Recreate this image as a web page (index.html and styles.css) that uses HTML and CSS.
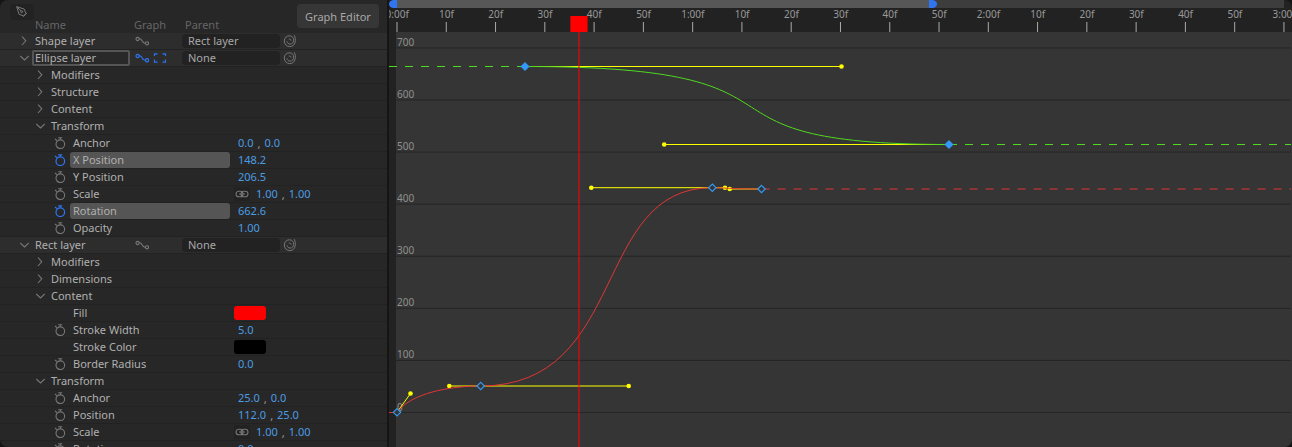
FILE: index.html
```
<!DOCTYPE html>
<html lang="en">
<head>
<meta charset="utf-8">
<title>Graph Editor</title>
<link rel="stylesheet" href="styles.css">
</head>
<body>
<svg class="defs" width="0" height="0">
  <symbol id="right" viewBox="0 0 10 10"><path d="M3 .5 6.800 4.800 3 9"/></symbol>
  <symbol id="down" viewBox="0 0 10 10"><path d="M1.300 3 5.500 7 9.700 3"/></symbol>
  <symbol id="graph" viewBox="0 0 14 10"><circle cx="2.600" cy="3" r="1.600"/><circle cx="12" cy="7.300" r="1.600"/><path d="M4.200 2.800C7.500 2 6.500 7.800 10.400 7.200"/></symbol>
  <symbol id="frame" viewBox="0 0 14 10"><path d="M1.500 3V.8h3M9.500.8h3V3M1.500 6.500v2.700h3M9.500 9.200h3V6.500"/></symbol>
  <symbol id="whip" viewBox="0 0 14 14"><path d="M11.200 1.200C13.400 5 12.800 12.600 6.800 12.600 3.600 12.600 1.300 10 1.300 7 1.300 3.800 3.600 1.800 6.400 1.800c2.600 0 4.300 1.900 4.300 4.400 0 2.300-1.500 3.900-3.500 3.900-1.700 0-3-1-3.200-2.700M5.800 5.200c1.200-.6 2.300.2 2.200 1.400"/></symbol>
  <symbol id="watch" viewBox="0 0 12 12"><circle cx="6.300" cy="7.200" r="4.300"/><path d="M4.200.8h4M6.300.8v2M1 2l2 1.600"/></symbol>
  <symbol id="link" viewBox="0 0 14 8"><rect x="1" y="1.200" width="7" height="5.600" rx="2.800"/><rect x="6" y="1.200" width="7" height="5.600" rx="2.800"/><path d="M4 4h6"/></symbol>
</svg>
<main class="app">
  <section class="panel">
    <header class="head">
      <div class="tool"><svg class="pen" viewBox="0 0 12 12"><path d="M.7.7 8.200 3l1.700 4.500-2.400 2.400L3 8.200ZM.7.7 5 5M7.200 10.700l3.600-3.600"/><circle cx="5.700" cy="5.700" r="1"/></svg></div>
      <div class="button">Graph Editor</div>
      <div class="cols"><span class="c-name">Name</span><span class="c-graph">Graph</span><span>Parent</span></div>
    </header>
    <div id="rows"></div>
  </section>
  <section class="timeline">
    <svg id="plot" width="903" height="447" viewBox="389 0 903 447"></svg>
  </section>
</main>
<script src="app.js"></script>
</body>
</html>
```
FILE: styles.css
```
* { box-sizing: border-box; }
body {
  margin: 0;
  background: #151515;
  font: 11px/16px "Noto Sans", sans-serif;
  color: #b0b0b0;
  overflow: hidden;
}
.defs { position: absolute; }
svg { fill: none; stroke: #777; stroke-width: 1.1; flex: none; }
.app { display: flex; gap: 2px; width: 1292px; height: 447px; }
.panel {
  width: 387px;
  height: 447px;
  overflow: hidden;
  background: #272727;
  border-radius: 8px 0 0 8px;
}
.head {
  height: 33px;
  display: grid;
  grid-template-columns: 297px 82px;
  grid-template-rows: 17px 16px;
}
.tool {
  width: 24px;
  height: 16px;
  margin: 4px 0 0 10px;
  border-radius: 4px;
  background: #222;
  display: flex;
  align-items: center;
  justify-content: center;
}
.pen { width: 12px; height: 12px; stroke: #777; stroke-width: 1; }
.button {
  grid-column: 2;
  grid-row: 1 / 3;
  height: 24px;
  margin-top: 4px;
  border-radius: 4px;
  background: #363636;
  color: #a8a8a8;
  line-height: 25px;
  text-align: center;
}
.cols { grid-row: 2; display: flex; padding-left: 35px; color: #666; }
.c-name { width: 99px; }
.c-graph { width: 51px; }
.row {
  height: 17px;
  display: flex;
  align-items: center;
  border-bottom: 1px solid #222;
}
.layer { background: #2d2d2d; }
.arrow { width: 10px; height: 10px; }
.level0 { padding-left: 19px; }
.level1 { padding-left: 35px; }
.level2 { padding-left: 54px; }
.level0 .arrow, .level1 .arrow { margin-right: 6px; }
.label { height: 16px; white-space: nowrap; }
.level0 .label { width: 100px; }
.level0 .editing {
  width: 98px;
  height: 16px;
  line-height: 12px;
  margin: 0 5px 0 -3px;
  padding-left: 1px;
  border: 2px solid #555;
  border-radius: 2px;
  background: #292929;
}
.icons { width: 47px; display: flex; align-items: center; gap: 4px; }
.graph { width: 14px; height: 10px; }
.frame { width: 14px; height: 10px; }
.select {
  width: 98px;
  height: 14px;
  line-height: 14px;
  padding-left: 6px;
  margin-right: 3px;
  border-radius: 4px;
  background: #222;
  color: #a8a8a8;
}
.whip { width: 14px; height: 14px; stroke-width: 1; }
.watch { width: 12px; height: 12px; margin-right: 4px; }
.no-watch { width: 16px; }
.prop { width: 160px; height: 16px; padding-left: 3px; border-radius: 3px; }
.selected { background: #555; }
.values { display: flex; align-items: center; padding-left: 8px; color: #4b9ce2; }
.values.linked { padding-left: 4px; }
.comma { color: #999; padding: 0 4px; position: relative; top: 1px; }
.link-box { width: 16px; height: 14px; margin-right: 6px; display: flex; align-items: center; justify-content: center; background: #222; border-radius: 2px; }
.link { width: 14px; height: 8px; }
.swatch { width: 32px; height: 14px; margin-left: 4px; border-radius: 3px; }
.red { background: #f00; }
.black { background: #000; }
.on { stroke: #2f74f0; stroke-width: 1.2; }
.timeline { width: 903px; height: 447px; background: #222; border-radius: 0 8px 8px 0; overflow: hidden; }
#plot { display: block; font: 10px "Noto Sans", sans-serif; stroke-width: 1; }
#plot text { stroke: none; fill: #999; }
#plot .value { fill: #909090; }
#plot .range { fill: #3d3d3d; stroke: none; }
#plot .work { fill: #575757; stroke: none; }
#plot .grip { fill: #2f74f0; stroke: none; }
#plot .field { fill: #353535; stroke: none; }
#plot .tick { stroke: #aaa; }
#plot .grid { stroke: #252525; }
#plot .green { stroke: #50da1e; }
#plot .redline { stroke: #e03535; }
#plot .dash { stroke-dasharray: 8 8; }
#plot .handle { stroke: #ff0; }
#plot .dot { fill: #ff0; stroke: none; }
#plot .key { fill: #353535; stroke: #3399f3; stroke-width: 1.2; }
#plot .key.full { fill: #3399ff; }
#plot .now { stroke: #f00; stroke-opacity: .52; stroke-width: 2; }
#plot .now-head { fill: #f00; stroke: none; }
```
FILE: app.js
```
const icon = (id, cls = '') => `<svg class="${id} ${cls}"><use href="#${id}"/></svg>`;
const arrow = open => `<svg class="arrow"><use href="#${open ? 'down' : 'right'}"/></svg>`;
const layer = (name, open, parent, active) => `<div class="row layer level0">${arrow(open)}
  <span class="label ${active ? 'editing' : ''}">${name}</span>
  <span class="icons">${icon('graph', active ? 'on' : '')}${active ? icon('frame', 'on') : ''}</span>
  <span class="select">${parent}</span>${icon('whip')}</div>`;
const group = (name, open) => `<div class="row level1">${arrow(open)}<span class="label">${name}</span></div>`;
const prop = (name, vals, opt = {}) => `<div class="row level2">
  ${opt.swatch ? '<span class="no-watch"></span>' : icon('watch', opt.on ? 'on' : '')}
  <span class="prop ${opt.on ? 'selected' : ''}">${name}</span>
  ${opt.swatch ? `<span class="swatch ${opt.swatch}"></span>` :
    `<span class="values ${opt.link ? 'linked' : ''}">${opt.link ? `<span class="link-box">${icon('link')}</span>` : ''}${
      vals.map(v => `<span>${v}</span>`).join('<span class="comma">,</span>')}</span>`}</div>`;

document.getElementById('rows').innerHTML = [
  layer('Shape layer', false, 'Rect layer'),
  layer('Ellipse layer', true, 'None', true),
  group('Modifiers'), group('Structure'), group('Content'), group('Transform', true),
  prop('Anchor', ['0.0', '0.0']),
  prop('X Position', ['148.2'], { on: true }),
  prop('Y Position', ['206.5']),
  prop('Scale', ['1.00', '1.00'], { link: true }),
  prop('Rotation', ['662.6'], { on: true }),
  prop('Opacity', ['1.00']),
  layer('Rect layer', true, 'None'),
  group('Modifiers'), group('Dimensions'), group('Content', true),
  prop('Fill', [], { swatch: 'red' }),
  prop('Stroke Width', ['5.0']),
  prop('Stroke Color', [], { swatch: 'black' }),
  prop('Border Radius', ['0.0']),
  group('Transform', true),
  prop('Anchor', ['25.0', '0.0']),
  prop('Position', ['112.0', '25.0']),
  prop('Scale', ['1.00', '1.00'], { link: true }),
  prop('Rotation', ['0.0'])
].join('');

const line = (cls, x1, y1, x2, y2) => `<line class="${cls}" x1="${x1}" y1="${y1}" x2="${x2}" y2="${y2}"/>`;
const dot = (x, y) => `<circle class="dot" cx="${x}" cy="${y}" r="2.3"/>`;
const key = (x, y, cls = '') => `<path class="key ${cls}" d="M${x} ${y - 3.7}l3.700 3.700-3.700 3.700-3.700-3.700z"/>`;
const handle = (x1, y1, x2, y2) => line('handle', x1, y1, x2, y2) + dot(x2, y2);

let s = `<rect class="range" x="397" y="0" width="887" height="8"/>
<rect class="work" x="397" y="0" width="532" height="8"/>
<path class="grip" d="M397 0v8h-4q-4-1-4-4t4-4zM929 0v8h4q4-1 4-4t-4-4z"/>
<rect class="field" x="396" y="32" width="896" height="415"/>`;
for (let i = 0; i <= 18; i++) {
  const x = 397 + i * 49.275;
  const name = i % 6 ? `${i % 6 * 10}f` : `${i / 6}:00f`;
  s += line('tick', x, 22, x, 32) + `<text x="${x + .2}" y="18" text-anchor="middle">${name}</text>`;
}
for (let v = 0; v <= 700; v += 100) {
  const y = 412.5 - v * .5208;
  s += line('grid', 396, y, 1291, y) + `<text class="value" x="397" y="${Math.round(y) - 2}">${v}</text>`;
}
s += line('green dash', 389, 66.5, 525, 66.5) + line('green dash', 949, 144.5, 1291, 144.5)
  + line('redline', 389, 412.5, 397, 412.5) + line('redline dash', 761.5, 189, 1291, 189)
  + handle(525, 66.5, 841.5, 66.5) + handle(949, 144.5, 664.2, 144.5)
  + handle(397, 412.3, 410.5, 393.5) + handle(480.7, 386, 449.3, 386) + handle(480.7, 386, 628.7, 386)
  + handle(712, 187.7, 591.3, 187.7) + handle(712, 187.7, 725, 187.7) + handle(761.5, 189, 729.7, 189)
  + '<path class="green" d="M525 66.500C841.500 66.500 664 144.500 949 144.500"/>'
  + '<path class="redline" d="M397 412.300C410.500 393.500 449 386 480.500 386C629 386 591.300 187.700 712 187.700C725 187.700 729.700 189 761.500 189"/>'
  + key(525, 66.5, 'full') + key(949, 144.5, 'full')
  + key(397, 412.3) + key(480.7, 386) + key(712.3, 187.7) + key(761.5, 189)
  + line('now', 579, 32, 579, 447) + '<rect class="now-head" x="570.4" y="16" width="17.2" height="16"/>';
document.getElementById('plot').innerHTML = s;
```
